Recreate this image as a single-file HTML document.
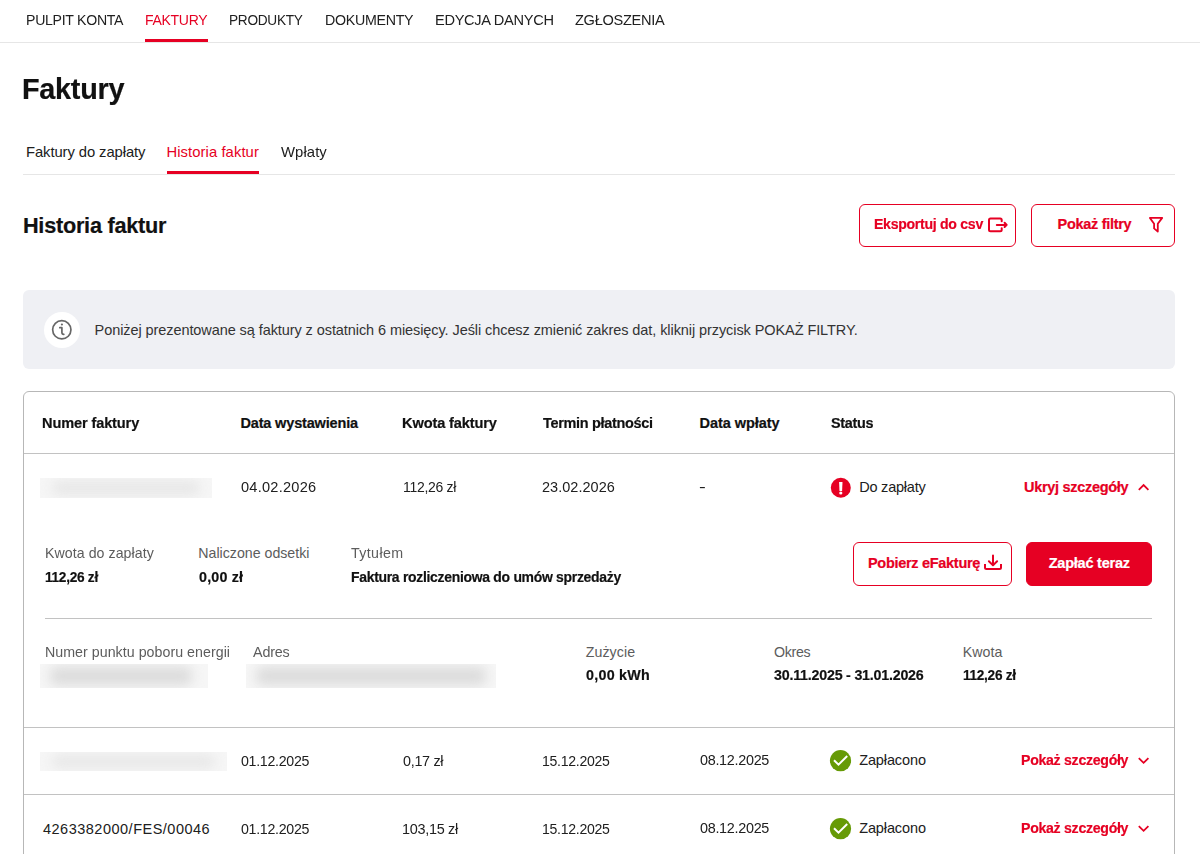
<!DOCTYPE html>
<html lang="pl"><head><meta charset="utf-8"><title>Faktury</title>
<style>
*{box-sizing:border-box;margin:0;padding:0}
html,body{width:1200px;height:854px;overflow:hidden;background:#fff}
body{font-family:"Liberation Sans",sans-serif;position:relative}
.t{position:absolute;white-space:nowrap;line-height:1;transform-origin:0 50%}
.a{position:absolute}
.ln{position:absolute;height:1px}
.btn{position:absolute;border:1px solid #e60023;border-radius:6px;background:#fff}
.bl{position:absolute;background:#f6f6f6;overflow:hidden}
.bl i{position:absolute;display:block;background:#dcdcdc;filter:blur(6px);border-radius:6px}
svg{position:absolute;overflow:visible}
</style></head><body>
<!-- top nav -->
<div class="a" style="left:145px;top:39px;width:63px;height:3px;background:#e60023"></div>
<div class="ln" style="left:0;top:42px;width:1200px;background:#e6e6e6"></div>
<!-- sub tabs -->
<div class="a" style="left:167px;top:171px;width:92px;height:3px;background:#e60023"></div>
<div class="ln" style="left:23px;top:174px;width:1152px;background:#e6e6e6"></div>
<!-- top buttons -->
<div class="btn" style="left:859px;top:204px;width:157px;height:43px"></div>
<div class="btn" style="left:1031px;top:204px;width:144px;height:43px"></div>
<svg style="left:980px;top:210px" width="40" height="30" viewBox="980 210 40 30" fill="none" stroke="#e60023" stroke-width="2" stroke-linecap="round" stroke-linejoin="round">
<path d="M1001.7 221.3V220Q1001.7 218.5 1000.2 218.5H990.5Q989 218.5 989 220V229.8Q989 231.3 990.5 231.3H1000.2Q1001.7 231.3 1001.7 229.8V228.3"/>
<path d="M996.8 224.9H1006.5M1004.6 222.8L1006.7 224.9L1004.6 227"/>
</svg>
<svg style="left:1140px;top:210px" width="40" height="30" viewBox="1140 210 40 30" fill="none" stroke="#e60023" stroke-width="1.8" stroke-linejoin="round">
<path d="M1149.9 217.9H1162.2L1157.8 223.8V231.6L1154.1 228.4V223.8Z"/>
</svg>
<!-- info box -->
<div class="a" style="left:23px;top:290px;width:1152px;height:79px;background:#eff0f4;border-radius:6px"></div>
<div class="a" style="left:44px;top:312px;width:36px;height:36px;border-radius:50%;background:#fff"></div>
<svg style="left:40px;top:308px" width="48" height="44" viewBox="40 308 48 44" fill="none" stroke="#676767" stroke-width="1.7" stroke-linecap="round" stroke-linejoin="round">
<circle cx="61.8" cy="329.8" r="9.15"/>
<path d="M59.8 327.7H61.9V332.6Q61.9 334.3 63.8 334.4"/>
<circle cx="61.9" cy="324.5" r="1.1" fill="#676767" stroke="none"/>
</svg>
<!-- table -->
<div class="a" style="left:23px;top:391px;width:1152px;height:500px;border:1px solid #b7b7b7;border-radius:6px"></div>
<div class="ln" style="left:24px;top:453px;width:1150px;background:#c2c2c2"></div>
<div class="ln" style="left:45px;top:618px;width:1107px;background:#c2c2c2"></div>
<div class="ln" style="left:24px;top:727px;width:1150px;background:#c2c2c2"></div>
<div class="ln" style="left:24px;top:794px;width:1150px;background:#c2c2c2"></div>
<!-- blurred -->
<div class="bl" style="left:40px;top:478px;width:172px;height:20px"><i style="left:12px;top:3px;right:12px;bottom:3px;background:#e7e7e7"></i></div>
<div class="bl" style="left:40px;top:664px;width:168px;height:24px"><i style="left:10px;top:3px;right:16px;bottom:3px"></i></div>
<div class="bl" style="left:246px;top:664px;width:250px;height:24px"><i style="left:10px;top:3px;right:10px;bottom:3px"></i></div>
<div class="bl" style="left:40px;top:752px;width:187px;height:19px"><i style="left:12px;top:3px;right:12px;bottom:3px;background:#e7e7e7"></i></div>
<!-- status icons -->
<svg style="left:822px;top:472px" width="40" height="30" viewBox="822 472 40 30">
<circle cx="840.8" cy="487.8" r="10" fill="#e60023"/>
<path d="M839.1 482H842.5L842.1 491H839.5Z" fill="#fff"/>
<circle cx="840.8" cy="493" r="1.6" fill="#fff"/>
</svg>
<svg style="left:822px;top:745px" width="40" height="30" viewBox="822 745 40 30">
<circle cx="840.5" cy="760.7" r="10.6" fill="#669a06"/>
<path d="M834 760.2L838.5 764.6L847.2 756" fill="none" stroke="#fff" stroke-width="2"/>
</svg>
<svg style="left:822px;top:813px" width="40" height="30" viewBox="822 745 40 30">
<circle cx="840.5" cy="760.7" r="10.6" fill="#669a06"/>
<path d="M834 760.2L838.5 764.6L847.2 756" fill="none" stroke="#fff" stroke-width="2"/>
</svg>
<!-- chevrons -->
<svg style="left:1125px;top:472px" width="40" height="30" viewBox="1125 472 40 30" fill="none" stroke="#e60023" stroke-width="1.8">
<path d="M1138.8 489.8L1143.6 485.1L1148.4 489.8"/></svg>
<svg style="left:1125px;top:745px" width="40" height="30" viewBox="1125 745 40 30" fill="none" stroke="#e60023" stroke-width="1.8">
<path d="M1138.8 758.1L1143.6 762.8L1148.4 758.1"/></svg>
<svg style="left:1125px;top:813px" width="40" height="30" viewBox="1125 745 40 30" fill="none" stroke="#e60023" stroke-width="1.8">
<path d="M1138.8 758.1L1143.6 762.8L1148.4 758.1"/></svg>
<!-- detail buttons -->
<div class="btn" style="left:853px;top:542px;width:159px;height:44px"></div>
<div class="btn" style="left:1026px;top:542px;width:126px;height:44px;background:#e60023"></div>
<svg style="left:975px;top:548px" width="40" height="30" viewBox="975 548 40 30" fill="none" stroke="#e60023" stroke-width="2" stroke-linecap="round" stroke-linejoin="round">
<path stroke-linecap="butt" d="M985 564V567.6Q985 569.1 986.5 569.1H999.5Q1001 569.1 1001 567.6V564"/>
<path d="M993 555.6V565.2M988.9 561.3L993 565.4L997.1 561.3"/>
</svg>
<div class="t" id="n1" style="left:25.74px;top:12.77px;font-size:14.8px;color:#202020;letter-spacing:-0.30px;transform:scaleX(0.9538)">PULPIT KONTA</div>
<div class="t" id="n2" style="left:144.56px;top:12.77px;font-size:14.8px;color:#e60023;letter-spacing:-0.30px;transform:scaleX(0.9459)">FAKTURY</div>
<div class="t" id="n3" style="left:228.76px;top:12.77px;font-size:14.8px;color:#202020;letter-spacing:-0.30px;transform:scaleX(0.9232)">PRODUKTY</div>
<div class="t" id="n4" style="left:324.70px;top:12.77px;font-size:14.8px;color:#202020;letter-spacing:-0.30px;transform:scaleX(0.9613)">DOKUMENTY</div>
<div class="t" id="n5" style="left:435.21px;top:12.77px;font-size:14.8px;color:#202020;letter-spacing:-0.30px;transform:scaleX(0.9864)">EDYCJA DANYCH</div>
<div class="t" id="n6" style="left:575.28px;top:12.77px;font-size:14.8px;color:#202020;letter-spacing:-0.30px;transform:scaleX(0.9851)">ZGŁOSZENIA</div>
<div class="t" id="h1" style="left:22.20px;top:73.83px;font-size:29.5px;color:#111;letter-spacing:-0.30px;transform:scaleX(0.9779);font-weight:bold;-webkit-text-stroke:0.2px">Faktury</div>
<div class="t" id="t1" style="left:25.97px;top:144.77px;font-size:14.8px;color:#202020;letter-spacing:-0.08px">Faktury do zapłaty</div>
<div class="t" id="t2" style="left:166.43px;top:144.77px;font-size:14.8px;color:#e60023;letter-spacing:0.08px">Historia faktur</div>
<div class="t" id="t3" style="left:280.70px;top:144.77px;font-size:14.8px;color:#202020;letter-spacing:0.08px;transform:scaleX(1.0034)">Wpłaty</div>
<div class="t" id="h2" style="left:22.96px;top:215.23px;font-size:21.7px;color:#111;letter-spacing:-0.25px;font-weight:bold;-webkit-text-stroke:0.2px">Historia faktur</div>
<div class="t" id="b1" style="left:874.44px;top:217.03px;font-size:14.5px;color:#e60023;letter-spacing:-0.30px;transform:scaleX(0.9724);font-weight:bold;-webkit-text-stroke:0.2px">Eksportuj do csv</div>
<div class="t" id="b2" style="left:1057.59px;top:217.03px;font-size:14.5px;color:#e60023;letter-spacing:-0.30px;font-weight:bold;-webkit-text-stroke:0.2px">Pokaż filtry</div>
<div class="t" id="info" style="left:94.58px;top:323.03px;font-size:14.5px;color:#333;letter-spacing:-0.08px">Poniżej prezentowane są faktury z ostatnich 6 miesięcy. Jeśli chcesz zmienić zakres dat, kliknij przycisk POKAŻ FILTRY.</div>
<div class="t" id="c1" style="left:42.42px;top:416.43px;font-size:14.5px;color:#111;letter-spacing:-0.12px;transform:scaleX(1.0039);font-weight:bold;-webkit-text-stroke:0.2px">Numer faktury</div>
<div class="t" id="c2" style="left:240.46px;top:416.43px;font-size:14.5px;color:#111;letter-spacing:-0.16px;font-weight:bold;-webkit-text-stroke:0.2px">Data wystawienia</div>
<div class="t" id="c3" style="left:402.42px;top:416.43px;font-size:14.5px;color:#111;letter-spacing:-0.13px;transform:scaleX(1.0065);font-weight:bold;-webkit-text-stroke:0.2px">Kwota faktury</div>
<div class="t" id="c4" style="left:543.07px;top:416.43px;font-size:14.5px;color:#111;letter-spacing:-0.30px;transform:scaleX(0.9967);font-weight:bold;-webkit-text-stroke:0.2px">Termin płatności</div>
<div class="t" id="c5" style="left:699.55px;top:416.43px;font-size:14.5px;color:#111;letter-spacing:-0.06px;font-weight:bold;-webkit-text-stroke:0.2px">Data wpłaty</div>
<div class="t" id="c6" style="left:830.88px;top:416.43px;font-size:14.5px;color:#111;letter-spacing:-0.30px;transform:scaleX(0.9929);font-weight:bold;-webkit-text-stroke:0.2px">Status</div>
<div class="t" id="r1b" style="left:240.85px;top:479.73px;font-size:14.5px;color:#202020;letter-spacing:0.25px;transform:scaleX(1.0044)">04.02.2026</div>
<div class="t" id="r1c" style="left:402.58px;top:479.73px;font-size:14.5px;color:#202020;letter-spacing:-0.30px;transform:scaleX(0.9649)">112,26 zł</div>
<div class="t" id="r1d" style="left:542.06px;top:479.73px;font-size:14.5px;color:#202020;letter-spacing:0.04px;transform:scaleX(0.9978)">23.02.2026</div>
<div class="t" id="r1e" style="left:699.21px;top:479.73px;font-size:14.5px;color:#202020;transform:scaleX(1.4030)">-</div>
<div class="t" id="r1f" style="left:859.26px;top:479.73px;font-size:14.5px;color:#202020;letter-spacing:-0.23px">Do zapłaty</div>
<div class="t" id="r1g" style="left:1023.97px;top:479.73px;font-size:14.5px;color:#e60023;letter-spacing:-0.30px;font-weight:bold;-webkit-text-stroke:0.2px">Ukryj szczegóły</div>
<div class="t" id="d1" style="left:44.97px;top:546.28px;font-size:14.2px;color:#5c5c5c;letter-spacing:0.06px;transform:scaleX(0.9980)">Kwota do zapłaty</div>
<div class="t" id="d2" style="left:45.39px;top:570.28px;font-size:14.2px;color:#111;letter-spacing:-0.30px;transform:scaleX(0.9635);font-weight:bold;-webkit-text-stroke:0.2px">112,26 zł</div>
<div class="t" id="d3" style="left:198.26px;top:546.28px;font-size:14.2px;color:#5c5c5c">Naliczone odsetki</div>
<div class="t" id="d4" style="left:198.77px;top:570.28px;font-size:14.2px;color:#111;letter-spacing:0.20px;transform:scaleX(1.0060);font-weight:bold;-webkit-text-stroke:0.2px">0,00 zł</div>
<div class="t" id="d5" style="left:351.30px;top:546.28px;font-size:14.2px;color:#5c5c5c;letter-spacing:0.38px;transform:scaleX(1.0030)">Tytułem</div>
<div class="t" id="d6" style="left:351.34px;top:570.28px;font-size:14.2px;color:#111;letter-spacing:-0.30px;transform:scaleX(0.9833);font-weight:bold;-webkit-text-stroke:0.2px">Faktura rozliczeniowa do umów sprzedaży</div>
<div class="t" id="b3" style="left:868.01px;top:556.03px;font-size:14.5px;color:#e60023;letter-spacing:-0.30px;font-weight:bold;-webkit-text-stroke:0.2px">Pobierz eFakturę</div>
<div class="t" id="b4" style="left:1048.70px;top:556.03px;font-size:14.5px;color:#fff;letter-spacing:-0.23px;font-weight:bold;-webkit-text-stroke:0.2px">Zapłać teraz</div>
<div class="t" id="e1" style="left:44.74px;top:645.28px;font-size:14.2px;color:#5c5c5c;letter-spacing:0.03px;transform:scaleX(1.0024)">Numer punktu poboru energii</div>
<div class="t" id="e2" style="left:252.59px;top:645.28px;font-size:14.2px;color:#5c5c5c;letter-spacing:-0.17px;transform:scaleX(1.0095)">Adres</div>
<div class="t" id="e3" style="left:585.71px;top:645.28px;font-size:14.2px;color:#5c5c5c;letter-spacing:0.09px">Zużycie</div>
<div class="t" id="e4" style="left:585.51px;top:667.98px;font-size:14.2px;color:#111;letter-spacing:0.26px;transform:scaleX(1.0068);font-weight:bold;-webkit-text-stroke:0.2px">0,00 kWh</div>
<div class="t" id="e5" style="left:774.09px;top:645.28px;font-size:14.2px;color:#5c5c5c;letter-spacing:-0.30px">Okres</div>
<div class="t" id="e6" style="left:774.16px;top:667.98px;font-size:14.2px;color:#111;letter-spacing:-0.21px;transform:scaleX(1.0035);font-weight:bold;-webkit-text-stroke:0.2px">30.11.2025 - 31.01.2026</div>
<div class="t" id="e7" style="left:962.66px;top:645.28px;font-size:14.2px;color:#5c5c5c;letter-spacing:0.10px">Kwota</div>
<div class="t" id="e8" style="left:963.31px;top:667.98px;font-size:14.2px;color:#111;letter-spacing:-0.30px;transform:scaleX(0.9596);font-weight:bold;-webkit-text-stroke:0.2px">112,26 zł</div>
<div class="t" id="r2b" style="left:240.82px;top:753.73px;font-size:14.5px;color:#202020;letter-spacing:-0.30px;transform:scaleX(0.9797)">01.12.2025</div>
<div class="t" id="r2c" style="left:402.68px;top:753.73px;font-size:14.5px;color:#202020;letter-spacing:-0.30px;transform:scaleX(0.9907)">0,17 zł</div>
<div class="t" id="r2d" style="left:541.98px;top:753.73px;font-size:14.5px;color:#202020;letter-spacing:-0.30px;transform:scaleX(0.9714)">15.12.2025</div>
<div class="t" id="r2e" style="left:699.50px;top:752.73px;font-size:14.5px;color:#202020;letter-spacing:-0.30px;transform:scaleX(0.9924)">08.12.2025</div>
<div class="t" id="r2f" style="left:859.15px;top:753.03px;font-size:14.5px;color:#202020;letter-spacing:-0.11px">Zapłacono</div>
<div class="t" id="r2g" style="left:1020.58px;top:753.23px;font-size:14.5px;color:#e60023;letter-spacing:-0.30px;transform:scaleX(0.9750);font-weight:bold;-webkit-text-stroke:0.2px">Pokaż szczegóły</div>
<div class="t" id="r3a" style="left:42.97px;top:821.73px;font-size:14.5px;color:#202020;letter-spacing:0.50px">4263382000/FES/00046</div>
<div class="t" id="r3b" style="left:240.82px;top:821.73px;font-size:14.5px;color:#202020;letter-spacing:-0.30px;transform:scaleX(0.9797)">01.12.2025</div>
<div class="t" id="r3c" style="left:401.96px;top:821.73px;font-size:14.5px;color:#202020;letter-spacing:-0.30px;transform:scaleX(0.9959)">103,15 zł</div>
<div class="t" id="r3d" style="left:541.98px;top:821.73px;font-size:14.5px;color:#202020;letter-spacing:-0.30px;transform:scaleX(0.9714)">15.12.2025</div>
<div class="t" id="r3e" style="left:699.50px;top:820.73px;font-size:14.5px;color:#202020;letter-spacing:-0.30px;transform:scaleX(0.9924)">08.12.2025</div>
<div class="t" id="r3f" style="left:859.15px;top:821.03px;font-size:14.5px;color:#202020;letter-spacing:-0.11px">Zapłacono</div>
<div class="t" id="r3g" style="left:1020.58px;top:821.23px;font-size:14.5px;color:#e60023;letter-spacing:-0.30px;transform:scaleX(0.9750);font-weight:bold;-webkit-text-stroke:0.2px">Pokaż szczegóły</div>
</body></html>
